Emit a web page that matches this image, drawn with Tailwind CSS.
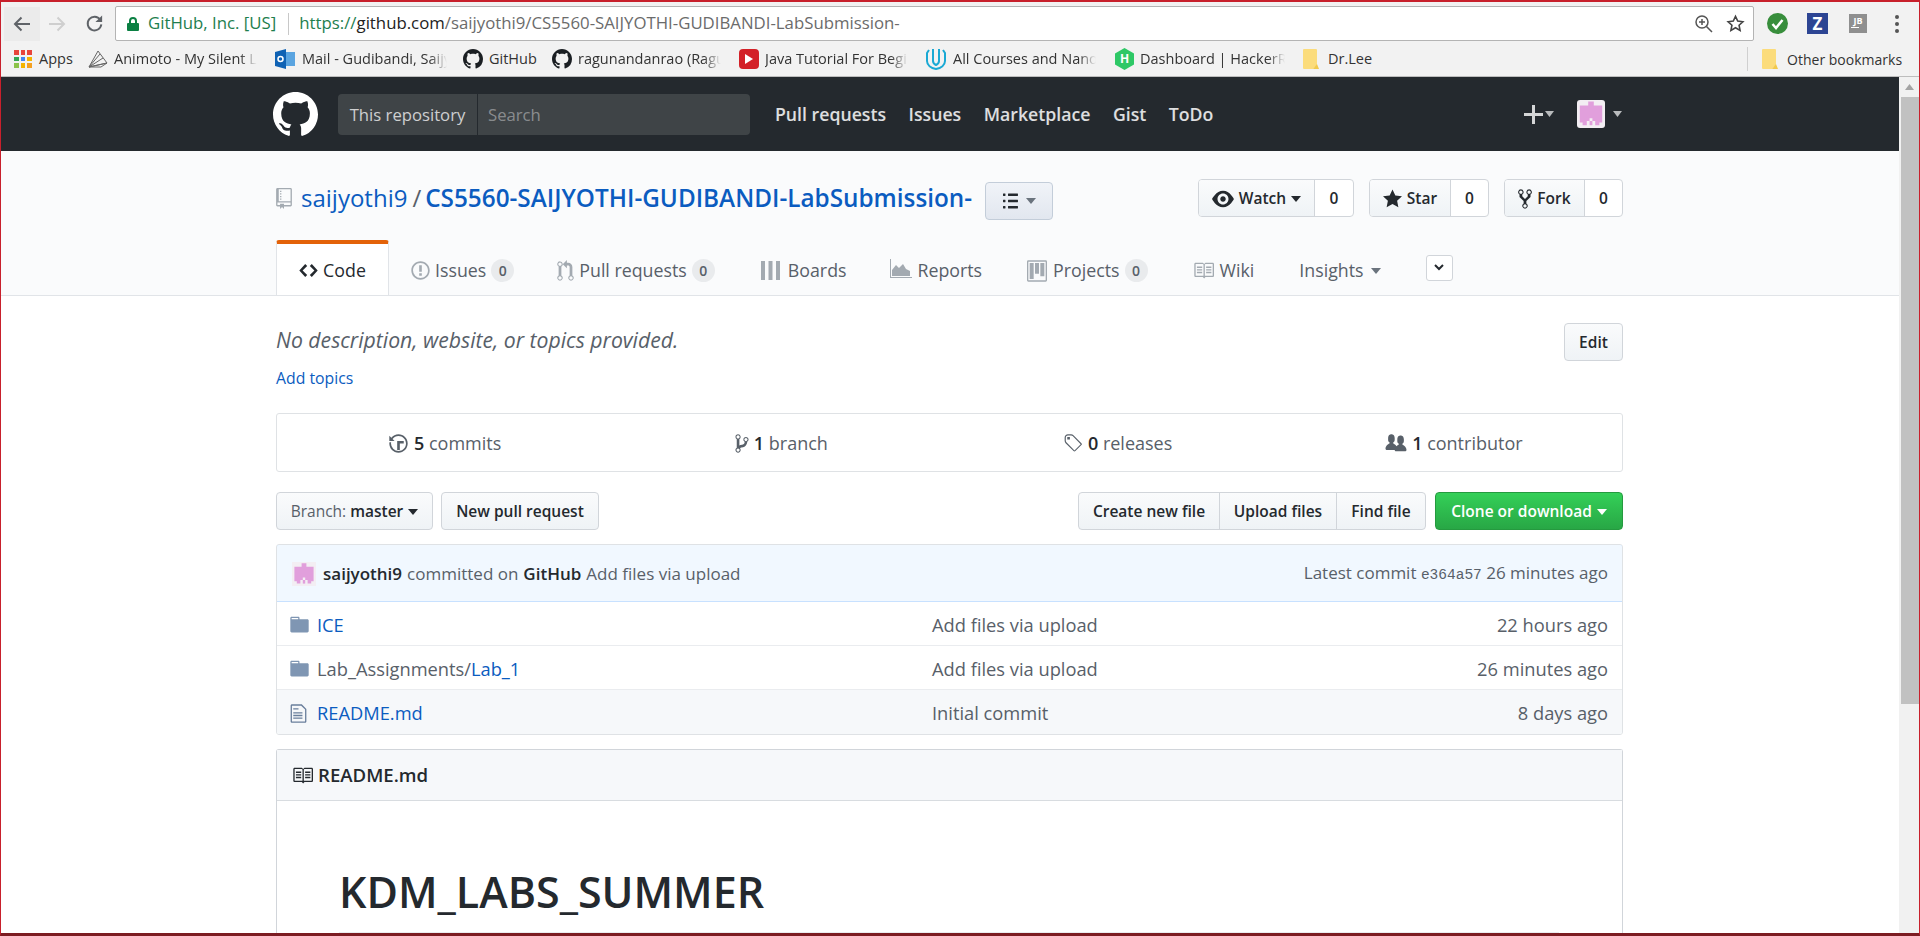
<!DOCTYPE html>
<html lang="en">
<head>
  <meta charset="UTF-8" />
  <title>saijyothi9/CS5560-SAIJYOTHI-GUDIBANDI-LabSubmission-</title>
  <script src="https://cdn.jsdelivr.net/npm/@tailwindcss/browser@4"></script>
</head>
<body class="bg-white overflow-hidden font-['Open_Sans','Noto_Sans',sans-serif] text-[16px] text-[#24292e]">

<div class="w-[1920px] h-[936px] flex flex-col overflow-hidden border-t-2 border-x border-b-[3px] border-t-[#c8202c] border-x-[#c8202c] border-b-[#7c1c22]">

  <!-- browser toolbar -->
  <div class="h-[42px] shrink-0 bg-[#f2f2f2] flex items-center pt-[1px]">
    <div class="w-[36px] h-[34px] ml-[3px] flex items-center justify-center bg-[#ebebeb]">
      <svg width="18" height="18" viewBox="0 0 18 18" fill="none" stroke="#5f6368" stroke-width="2"><path d="M17 9H2M8.500 2.500L2 9l6.500 6.500"/></svg>
    </div>
    <div class="w-[33px] flex justify-center">
      <svg width="18" height="18" viewBox="0 0 18 18" fill="none" stroke="#cfcfcf" stroke-width="2"><path d="M1 9h15M9.500 2.500L16 9l-6.500 6.500"/></svg>
    </div>
    <div class="w-[42px] flex justify-center">
      <svg width="19" height="19" viewBox="0 0 20 20" fill="none" stroke="#5f6368" stroke-width="2"><path d="M16 6a7.200 7.200 0 1 0 1.200 5"/><path d="M18 1.500v7h-7" fill="#5f6368" stroke="none"/></svg>
    </div>
    <!-- address bar -->
    <div class="w-[1639px] shrink-0 h-[35px] bg-white border border-[#b4b4b4] rounded-[2px] flex items-center text-[16.800px] leading-none">
      <svg class="ml-[11px]" width="12" height="16" viewBox="0 0 12 16"><path fill="#0b8043" d="M2 7V5a4 4 0 0 1 8 0v2h1a1 1 0 0 1 1 1v6a1 1 0 0 1-1 1H1a1 1 0 0 1-1-1V8a1 1 0 0 1 1-1zm2 0h4V5a2 2 0 0 0-4 0z"/></svg>
      <span class="ml-[9px] text-[#1e7e4e]">GitHub, Inc. [US]</span>
      <span class="ml-[12px] w-px h-[22px] bg-[#c8c8c8]"></span>
      <span class="ml-[10px]"><span class="text-[#1e7e4e]">https://</span><span class="text-[#222]">github.com</span><span class="text-[#6b6b6b]">/saijyothi9/CS5560-SAIJYOTHI-GUDIBANDI-LabSubmission-</span></span>
      <div class="ml-auto mr-[8px] flex items-center gap-[13px]">
        <svg width="19" height="19" viewBox="0 0 19 19" fill="none" stroke="#555" stroke-width="1.500"><circle cx="8" cy="8" r="6"/><path d="M12.500 12.500L18 18M8 5v6M5 8h6"/></svg>
        <svg width="19" height="19" viewBox="0 0 24 24" fill="none" stroke="#444" stroke-width="2"><path d="M12 3l2.800 6 6.500.8-4.800 4.400 1.300 6.500L12 17.400l-5.800 3.300 1.300-6.500L2.700 9.800 9.200 9z"/></svg>
      </div>
    </div>
    <!-- extensions -->
    <div class="ml-[13px] flex items-center">
      <svg width="21" height="21" viewBox="0 0 21 21"><circle cx="10.500" cy="10.500" r="10.500" fill="#388e3c"/><path d="M5.500 11l3.500 4 6.500-8" fill="none" stroke="#fff" stroke-width="2.500"/></svg>
      <span class="ml-[19px] w-[21px] h-[21px] bg-[#2d4593] text-white text-[17px] font-bold flex items-center justify-center">Z</span>
      <span class="ml-[21px] w-[18px] h-[19px] bg-[#8f8f8f] text-white text-[9px] leading-none pt-[2px] text-center font-bold">JB<span class="block w-[8px] h-[1px] ml-[2px] mt-[2px] bg-white"></span></span>
      <div class="ml-[28px] flex flex-col gap-[3px]">
        <span class="w-[4px] h-[4px] rounded-full bg-[#555]"></span>
        <span class="w-[4px] h-[4px] rounded-full bg-[#555]"></span>
        <span class="w-[4px] h-[4px] rounded-full bg-[#555]"></span>
      </div>
    </div>
  </div>

  <!-- bookmarks bar -->
  <div class="h-[33px] shrink-0 bg-[#f2f2f2] border-b border-[#bdbdbd] pb-[2px] flex items-center text-[14.500px] text-[#333] whitespace-nowrap">
    <div class="ml-[13px] w-[18px] h-[18px] grid grid-cols-3 gap-[2px]">
      <span class="bg-[#e8453c]"></span><span class="bg-[#e8453c]"></span><span class="bg-[#e8453c]"></span>
      <span class="bg-[#34a853]"></span><span class="bg-[#4285f4]"></span><span class="bg-[#f4b400]"></span>
      <span class="bg-[#8bc34a]"></span><span class="bg-[#f4b400]"></span><span class="bg-[#f4a020]"></span>
    </div>
    <span class="ml-[7px] w-[49px]">Apps</span>
    <svg width="20" height="20" viewBox="0 0 20 20" fill="none" stroke="#666" stroke-width="1"><path d="M1 18L10 2l9 12zM1 18l11-13M1 18l14-9M1 18l18-4M1 18h12l6-4"/></svg>
    <span class="ml-[6px] w-[143px] overflow-hidden [mask-image:linear-gradient(to_right,black_88%,transparent)]">Animoto - My Silent Life</span>
    <svg class="ml-[18px]" width="20" height="20" viewBox="0 0 20 20"><rect x="7" y="3" width="13" height="14" fill="#5aa4e0"/><path fill="#0f62b4" d="M0 3l11-3v20L0 17z"/><circle cx="5.500" cy="10" r="2.500" fill="none" stroke="#fff" stroke-width="1.500"/></svg>
    <span class="ml-[7px] w-[145px] overflow-hidden [mask-image:linear-gradient(to_right,black_88%,transparent)]">Mail - Gudibandi, Saijyothi</span>
    <svg class="ml-[16px]" width="20" height="20" viewBox="0 0 16 16"><path fill="#1b1f23" d="M8 0C3.580 0 0 3.580 0 8c0 3.540 2.290 6.530 5.470 7.590.4.070.55-.17.55-.38 0-.19-.01-.82-.01-1.490-2.010.37-2.530-.49-2.690-.94-.09-.23-.48-.94-.82-1.130-.28-.15-.68-.52-.01-.53.63-.01 1.080.58 1.230.82.72 1.210 1.870.87 2.330.66.07-.52.28-.87.51-1.070-1.780-.2-3.640-.89-3.640-3.950 0-.87.31-1.590.82-2.150-.08-.2-.36-1.020.08-2.120 0 0 .67-.21 2.200.82.64-.18 1.320-.27 2-.27.68 0 1.360.09 2 .27 1.530-1.040 2.200-.82 2.200-.82.44 1.100.16 1.920.08 2.120.51.56.82 1.270.82 2.150 0 3.070-1.870 3.750-3.650 3.950.29.25.54.73.54 1.480 0 1.070-.01 1.930-.01 2.200 0 .21.15.46.55.38A8.013 8.013 0 0 0 16 8c0-4.420-3.580-8-8-8z"/></svg>
    <span class="ml-[6px] w-[63px]">GitHub</span>
    <svg width="20" height="20" viewBox="0 0 16 16"><path fill="#1b1f23" d="M8 0C3.580 0 0 3.580 0 8c0 3.540 2.290 6.530 5.470 7.590.4.070.55-.17.55-.38 0-.19-.01-.82-.01-1.490-2.010.37-2.530-.49-2.690-.94-.09-.23-.48-.94-.82-1.130-.28-.15-.68-.52-.01-.53.63-.01 1.080.58 1.230.82.72 1.210 1.870.87 2.330.66.07-.52.28-.87.51-1.070-1.780-.2-3.640-.89-3.640-3.950 0-.87.31-1.590.82-2.150-.08-.2-.36-1.020.08-2.120 0 0 .67-.21 2.200.82.64-.18 1.320-.27 2-.27.68 0 1.360.09 2 .27 1.530-1.040 2.200-.82 2.200-.82.44 1.100.16 1.920.08 2.120.51.56.82 1.270.82 2.150 0 3.070-1.870 3.750-3.650 3.950.29.25.54.73.54 1.480 0 1.070-.01 1.930-.01 2.200 0 .21.15.46.55.38A8.013 8.013 0 0 0 16 8c0-4.420-3.580-8-8-8z"/></svg>
    <span class="ml-[6px] w-[143px] overflow-hidden [mask-image:linear-gradient(to_right,black_88%,transparent)]">ragunandanrao (Ragunandan)</span>
    <span class="ml-[18px] w-[20px] h-[20px] rounded-[4px] bg-[#d32027] flex items-center justify-center"><svg width="8" height="10" viewBox="0 0 8 10"><path fill="#fff" d="M0 0l8 5-8 5z"/></svg></span>
    <span class="ml-[6px] w-[143px] overflow-hidden [mask-image:linear-gradient(to_right,black_88%,transparent)]">Java Tutorial For Beginners</span>
    <svg class="ml-[18px]" width="20" height="22" viewBox="0 0 20 22" fill="none" stroke="#1aa9d4" stroke-width="2"><path d="M3 2l-2 3v8c0 4 4 7 9 8 5-1 9-4 9-8V5l-2-3M7 1v12c0 2 1 3 3 4 2-1 3-2 3-4V1"/></svg>
    <span class="ml-[7px] w-[143px] overflow-hidden [mask-image:linear-gradient(to_right,black_88%,transparent)]">All Courses and Nanodegrees</span>
    <span class="ml-[19px] w-[19px] h-[22px] bg-[#2ec866] [clip-path:polygon(50%_0,100%_25%,100%_75%,50%_100%,0_75%,0_25%)] text-white text-[12px] font-bold flex items-center justify-center">H</span>
    <span class="ml-[6px] w-[145px] overflow-hidden [mask-image:linear-gradient(to_right,black_88%,transparent)]">Dashboard | HackerRank</span>
    <svg class="ml-[18px]" width="16" height="20" viewBox="0 0 16 20"><path fill="#fbdc7c" d="M0 1a1 1 0 0 1 1-1h12a1 1 0 0 1 1 1v15l-4 4H1a1 1 0 0 1-1-1z"/><path fill="#f2c94c" d="M14 15l2 5h-6z"/></svg>
    <span class="ml-[9px]">Dr.Lee</span>
    <span class="ml-[375px] w-px h-[24px] bg-[#d0d0d0]"></span>
    <svg class="ml-[14px]" width="16" height="20" viewBox="0 0 16 20"><path fill="#fbdc7c" d="M0 1a1 1 0 0 1 1-1h12a1 1 0 0 1 1 1v15l-4 4H1a1 1 0 0 1-1-1z"/><path fill="#f2c94c" d="M14 15l2 5h-6z"/></svg>
    <span class="ml-[9px] text-[14px]">Other bookmarks</span>
  </div>

  <div class="flex-1 flex min-h-0">
    <div class="w-[1898px] shrink-0 overflow-hidden">

      <!-- github header -->
      <header class="h-[74px] bg-[#24292e] flex items-center pl-[272px] text-white">
        <svg width="45" height="45" viewBox="0 0 16 16"><path fill="#fff" d="M8 0C3.580 0 0 3.580 0 8c0 3.540 2.290 6.530 5.470 7.590.4.070.55-.17.55-.38 0-.19-.01-.82-.01-1.490-2.010.37-2.530-.49-2.690-.94-.09-.23-.48-.94-.82-1.130-.28-.15-.68-.52-.01-.53.63-.01 1.080.58 1.230.82.72 1.210 1.870.87 2.330.66.07-.52.28-.87.51-1.070-1.780-.2-3.640-.89-3.640-3.950 0-.87.31-1.590.82-2.150-.08-.2-.36-1.020.08-2.120 0 0 .67-.21 2.200.82.64-.18 1.320-.27 2-.27.68 0 1.360.09 2 .27 1.530-1.040 2.200-.82 2.200-.82.44 1.100.16 1.920.08 2.120.51.56.82 1.270.82 2.150 0 3.070-1.870 3.750-3.650 3.950.29.25.54.73.54 1.480 0 1.070-.01 1.930-.01 2.200 0 .21.15.46.55.38A8.013 8.013 0 0 0 16 8c0-4.420-3.580-8-8-8z"/></svg>
        <div class="ml-[20px] w-[412px] h-[41px] rounded-[4px] bg-[#3f4447] flex items-center text-[16.700px]">
          <span class="w-[140px] h-full pt-[1px] flex items-center justify-center border-r border-[#24292e] text-white/75">This repository</span>
          <span class="ml-[10px] pt-[1px] text-white/40">Search</span>
        </div>
        <nav class="flex items-center ml-[25px] pt-[1px] gap-[22.500px] text-[17.700px] font-semibold text-white/85">
          <span>Pull requests</span><span>Issues</span><span>Marketplace</span><span>Gist</span><span>ToDo</span>
        </nav>
        <div class="ml-auto mr-[277px] flex items-center">
          <svg width="19" height="19" viewBox="0 0 19 19"><path fill="#d5d6d7" d="M8 0h3v8h8v3h-8v8H8v-8H0V8h8z"/></svg>
          <svg class="ml-[2px]" width="9" height="6" viewBox="0 0 9 6"><path fill="#b9bbbd" d="M0 0h9L4.500 6z"/></svg>
          <svg class="ml-[23px] rounded-[3px]" width="28" height="28" viewBox="0 0 20 20"><rect width="20" height="20" fill="#f3eef3"/><path fill="#e19fdc" d="M8 1h4v3h6v12h-2v2h-3v-3h-2v-2H9v2H7v3H4v-2H2V4h6z"/><rect x="9" y="15" width="2" height="3" fill="#e19fdc"/></svg>
          <svg class="ml-[8px]" width="9" height="6" viewBox="0 0 9 6"><path fill="#b9bbbd" d="M0 0h9L4.500 6z"/></svg>
        </div>
      </header>

      <!-- repo head -->
      <div class="h-[145px] bg-[#fafbfc] border-b border-[#e1e4e8]">
        <div class="ml-[275px] w-[1347px] h-full flex flex-col">
          <div class="h-[91px] flex pt-[28px]">
            <div class="flex items-center h-[38px] text-[24px] text-[#586069]">
              <svg width="16" height="21" viewBox="0 0 12 16"><path fill="#a3aab1" d="M4 9H3V8h1v1zm0-3H3v1h1V6zm0-2H3v1h1V4zm0-2H3v1h1V2zm8-1v12c0 .55-.45 1-1 1H6v2l-1.500-1.500L3 16v-2H1c-.55 0-1-.45-1-1V1c0-.55.45-1 1-1h10c.55 0 1 .45 1 1zm-1 10H1v2h2v-1h3v1h5v-2zm0-10H2v9h9V1z"/></svg>
              <span class="ml-[9px] text-[#0b5cc0]">saijyothi9</span>
              <span class="ml-[5px] mr-[4px]">/</span>
              <span class="text-[24.300px] font-semibold text-[#0b5cc0]">CS5560-SAIJYOTHI-GUDIBANDI-LabSubmission-</span>
              <span class="ml-[13px] mt-[6px] w-[68px] h-[38px] border border-[#c3cdd9] rounded-[4px] bg-gradient-to-b from-[#f0f3f8] to-[#e2e7ef] flex items-center justify-center gap-[7px]">
                <svg width="17" height="20" viewBox="0 0 12 16"><path fill="#24292e" d="M2 13c0 .59 0 1-.59 1H.59C0 14 0 13.590 0 13c0-.59 0-1 .59-1h.81c.59 0 .59.41.59 1H2zm2.590-9h6.810c.59 0 .59-.41.59-1 0-.59 0-1-.59-1H4.590C4 2 4 2.410 4 3c0 .59 0 1 .59 1zM1.410 7H.59C0 7 0 7.410 0 8c0 .59 0 1 .59 1h.81c.59 0 .59-.41.59-1 0-.59 0-1-.59-1h.01zm0-5H.59C0 2 0 2.410 0 3c0 .59 0 1 .59 1h.81c.59 0 .59-.41.59-1 0-.59 0-1-.59-1h.01zm10 5H4.590C4 7 4 7.410 4 8c0 .59 0 1 .59 1h6.810c.59 0 .59-.41.59-1 0-.59 0-1-.59-1h.01zm0 5H4.590C4 12 4 12.410 4 13c0 .59 0 1 .59 1h6.810c.59 0 .59-.41.59-1 0-.59 0-1-.59-1h.01z"/></svg>
                <svg width="10" height="6" viewBox="0 0 10 6"><path fill="#6a737d" d="M0 0h10L5 6z"/></svg>
              </span>
            </div>
            <div class="ml-auto flex gap-[15px] text-[15.500px] font-semibold">
              <div class="flex h-[38px] border border-[#d1d5da] rounded-[4px] overflow-hidden bg-white">
                <span class="w-[116px] pt-[1px] bg-gradient-to-b from-[#fafbfc] to-[#eff3f6] border-r border-[#d1d5da] flex items-center justify-center gap-[5px]">
                  <svg width="22" height="22" viewBox="0 0 16 16"><path fill="#24292e" d="M8.060 2C3 2 0 8 0 8s3 6 8.060 6C13 14 16 8 16 8s-3-6-7.940-6zM8 12c-2.200 0-4-1.780-4-4 0-2.200 1.800-4 4-4 2.220 0 4 1.800 4 4 0 2.220-1.780 4-4 4zm2-4c0 1.110-.89 2-2 2-1.110 0-2-.89-2-2 0-1.110.89-2 2-2 1.110 0 2 .89 2 2z"/></svg>
                  Watch
                  <svg width="10" height="6" viewBox="0 0 10 6"><path fill="#24292e" d="M0 0h10L5 6z"/></svg>
                </span>
                <span class="w-[38px] pt-[1px] flex items-center justify-center">0</span>
              </div>
              <div class="flex h-[38px] border border-[#d1d5da] rounded-[4px] overflow-hidden bg-white">
                <span class="w-[81px] pt-[1px] bg-gradient-to-b from-[#fafbfc] to-[#eff3f6] border-r border-[#d1d5da] flex items-center justify-center gap-[5px]">
                  <svg width="19" height="22" viewBox="0 0 14 16"><path fill="#24292e" d="M14 6l-4.900-.64L7 1 4.900 5.360 0 6l3.600 3.260L2.670 14 7 11.670 11.330 14l-.93-4.740L14 6z"/></svg>
                  Star
                </span>
                <span class="w-[37px] pt-[1px] flex items-center justify-center">0</span>
              </div>
              <div class="flex h-[38px] border border-[#d1d5da] rounded-[4px] overflow-hidden bg-white">
                <span class="w-[80px] pt-[1px] bg-gradient-to-b from-[#fafbfc] to-[#eff3f6] border-r border-[#d1d5da] flex items-center justify-center gap-[5px]">
                  <svg width="14" height="22" viewBox="0 0 10 16"><path fill="#24292e" d="M8 1a1.993 1.993 0 0 0-1 3.720V6L5 8 3 6V4.720A1.993 1.993 0 0 0 2 1a1.993 1.993 0 0 0-1 3.720V6.500l3 3v1.780A1.993 1.993 0 0 0 5 15a1.993 1.993 0 0 0 1-3.720V9.500l3-3V4.720A1.993 1.993 0 0 0 8 1zM2 4.200C1.340 4.200.8 3.650.8 3c0-.65.55-1.200 1.200-1.200.65 0 1.200.55 1.200 1.200 0 .65-.55 1.200-1.200 1.200zm3 10c-.66 0-1.200-.55-1.200-1.200 0-.65.55-1.200 1.200-1.200.65 0 1.200.55 1.200 1.200 0 .65-.55 1.200-1.200 1.200zm3-10c-.66 0-1.200-.55-1.200-1.200 0-.65.55-1.200 1.200-1.200.65 0 1.200.55 1.200 1.200 0 .65-.55 1.200-1.200 1.200z"/></svg>
                  Fork
                </span>
                <span class="w-[37px] pt-[1px] flex items-center justify-center">0</span>
              </div>
            </div>
          </div>

          <!-- tabs -->
          <div class="flex-1 flex items-stretch text-[17.800px] text-[#586069]">
            <div class="relative z-10 w-[113px] h-[55px] pt-[1px] bg-white border-x border-[#e1e4e8] border-t-[4px] border-t-[#e36209] rounded-t-[3px] flex items-center justify-center gap-[5px] text-[#24292e]">
              <svg width="19" height="21" viewBox="0 0 14 16"><path fill="#24292e" d="M9.500 3L8 4.500 11.500 8 8 11.500 9.500 13 14 8 9.500 3zm-5 0L0 8l4.500 5L6 11.500 2.500 8 6 4.500 4.500 3z"/></svg>
              Code
            </div>
            <div class="flex items-center ml-[22px] pt-[6px]">
              <svg width="19" height="21" viewBox="0 0 14 16"><path fill="#a3aab1" d="M7 2.300c3.140 0 5.700 2.560 5.700 5.700s-2.560 5.700-5.700 5.700A5.710 5.710 0 0 1 1.300 8c0-3.140 2.560-5.700 5.700-5.700zM7 1C3.140 1 0 4.140 0 8s3.140 7 7 7 7-3.140 7-7-3.140-7-7-7zm1 3H6v5h2V4zm0 6H6v2h2v-2z"/></svg>
              <span class="ml-[5px]">Issues</span>
              <span class="ml-[5px] w-[23px] h-[23px] rounded-full bg-[#e9ebed] text-[#586069] text-[14px] font-semibold flex items-center justify-center">0</span>
            </div>
            <div class="flex items-center ml-[43px] pt-[6px]">
              <svg width="17" height="22" viewBox="0 0 12 16"><path fill="#a3aab1" d="M11 11.280V5c-.03-.78-.34-1.470-.94-2.060C9.460 2.350 8.780 2.030 8 2H7V0L4 3l3 3V4h1c.27.020.48.11.69.31.21.2.3.42.31.69v6.280A1.993 1.993 0 0 0 10 15a1.993 1.993 0 0 0 1-3.720zm-1 2.920c-.66 0-1.200-.55-1.200-1.200 0-.65.55-1.200 1.200-1.200.65 0 1.200.55 1.200 1.200 0 .65-.55 1.200-1.200 1.200zM4 3c0-1.110-.89-2-2-2a1.993 1.993 0 0 0-1 3.720v6.560A1.993 1.993 0 0 0 2 15a1.993 1.993 0 0 0 1-3.720V4.720c.59-.34 1-.98 1-1.720zm-.8 10c0 .66-.55 1.200-1.200 1.200-.65 0-1.200-.55-1.200-1.200 0-.65.55-1.200 1.200-1.200.65 0 1.200.55 1.200 1.200zM2 4.200C1.340 4.200.8 3.650.8 3c0-.65.55-1.200 1.200-1.200.65 0 1.200.55 1.200 1.200 0 .65-.55 1.200-1.200 1.200z"/></svg>
              <span class="ml-[5px]">Pull requests</span>
              <span class="ml-[5px] w-[23px] h-[23px] rounded-full bg-[#e9ebed] text-[#586069] text-[14px] font-semibold flex items-center justify-center">0</span>
            </div>
            <div class="flex items-center ml-[46px] pt-[6px]">
              <svg width="19" height="19" viewBox="0 0 19 19"><path fill="#a3aab1" d="M0 0h4v19H0zM7.500 0h4v19h-4zM15 0h4v19h-4z"/></svg>
              <span class="ml-[8px]">Boards</span>
            </div>
            <div class="flex items-center ml-[44px] pt-[6px]">
              <svg class="mb-[5px]" width="22" height="19" viewBox="0 0 22 19"><path fill="#a3aab1" d="M0 0h1v18h21v1H0zM2 17v-6l4-5 3 3 4-4 3 5 4 2v5z"/></svg>
              <span class="ml-[5px]">Reports</span>
            </div>
            <div class="flex items-center ml-[45px] pt-[6px]">
              <svg width="20" height="22" viewBox="0 0 15 16"><path fill="#a3aab1" fill-rule="evenodd" d="M10 12h3V2h-3v10zm-4-2h3V2H6v8zm-4 4h3V2H2v12zm-1 1h13V1H1v14zM14 0H1a1 1 0 0 0-1 1v14a1 1 0 0 0 1 1h13a1 1 0 0 0 1-1V1a1 1 0 0 0-1-1z"/></svg>
              <span class="ml-[6px]">Projects</span>
              <span class="ml-[5px] w-[23px] h-[23px] rounded-full bg-[#e9ebed] text-[#586069] text-[14px] font-semibold flex items-center justify-center">0</span>
            </div>
            <div class="flex items-center ml-[45px] pt-[6px]">
              <svg width="21" height="21" viewBox="0 0 16 16"><path fill="#a3aab1" d="M3 5h4v1H3V5zm0 3h4V7H3v1zm0 2h4V9H3v1zm11-5h-4v1h4V5zm0 2h-4v1h4V7zm0 2h-4v1h4V9zm2-6v9c0 .55-.45 1-1 1H9.500l-1 1-1-1H2c-.55 0-1-.45-1-1V3c0-.55.45-1 1-1h5.500l1 1 1-1H15c.55 0 1 .45 1 1zm-8 .5L7.500 3H2v9h6V3.500zm7-.5H9.500l-.5.5V12h6V3z"/></svg>
              <span class="ml-[6px]">Wiki</span>
            </div>
            <div class="flex items-center ml-[45px] pt-[6px]">
              <span>Insights</span>
              <svg class="ml-[7px]" width="10" height="6" viewBox="0 0 10 6"><path fill="#6a737d" d="M0 0h10L5 6z"/></svg>
            </div>
            <div class="flex items-center ml-[45px]">
              <span class="w-[27px] h-[26px] bg-white border border-[#d1d5da] rounded-[3px] flex items-center justify-center">
                <svg width="10" height="7" viewBox="0 0 10 7" fill="none" stroke="#24292e" stroke-width="2"><path d="M1 1l4 4 4-4"/></svg>
              </span>
            </div>
          </div>
        </div>
      </div>

      <!-- repo content -->
      <main class="ml-[275px] w-[1347px]">
        <div class="h-[27px]"></div>
        <div class="flex justify-between h-[38px]">
          <p class="italic text-[21.200px] text-[#586069] leading-[34px]">No description, website, or topics provided.</p>
          <span class="w-[59px] h-[38px] pt-[1px] bg-gradient-to-b from-[#fafbfc] to-[#eff3f6] border border-[#d1d5da] rounded-[4px] text-[15.500px] font-semibold flex items-center justify-center">Edit</span>
        </div>
        <p class="h-[24px] mt-[5px] text-[15.800px] leading-[24px] text-[#0b5cc0]">Add topics</p>

        <!-- numbers summary -->
        <div class="mt-[23px] h-[59px] pt-[1px] border border-[#dfe2e5] rounded-[3px] grid grid-cols-4 text-[18px] text-[#586069]">
          <div class="flex items-center justify-center gap-[6px]">
            <svg width="19" height="21" viewBox="0 0 14 16"><path fill="#586069" d="M8 13H6V6h5v2H8v5zM7 1C4.810 1 2.870 2.020 1.590 3.590L0 2v4h4L2.500 4.500C3.550 3.170 5.170 2.300 7 2.300c3.140 0 5.700 2.560 5.700 5.700s-2.560 5.700-5.700 5.700A5.710 5.710 0 0 1 1.300 8c0-.34.03-.67.09-1H.08C.03 7.330 0 7.660 0 8c0 3.860 3.140 7 7 7s7-3.140 7-7-3.140-7-7-7z"/></svg>
            <span><b class="font-semibold text-[#24292e]">5</b> commits</span>
          </div>
          <div class="flex items-center justify-center gap-[5px]">
            <svg width="14" height="21" viewBox="0 0 10 16"><path fill="#586069" d="M10 5c0-1.110-.89-2-2-2a1.993 1.993 0 0 0-1 3.720v.3c-.02.52-.23.98-.63 1.380-.4.4-.86.61-1.380.63-.83.020-1.480.16-2 .45V4.720a1.993 1.993 0 0 0-1-3.720C.88 1 0 1.890 0 3a2 2 0 0 0 1 1.720v6.560c-.59.35-1 .99-1 1.720 0 1.110.89 2 2 2 1.110 0 2-.89 2-2 0-.53-.2-1-.53-1.360.09-.06.48-.41.59-.47.25-.11.56-.17.94-.17 1.050-.05 1.950-.45 2.750-1.250S8.950 7.770 9 6.730h-.02C9.590 6.370 10 5.730 10 5zM2 1.800c.66 0 1.200.55 1.200 1.200 0 .65-.55 1.200-1.200 1.200C1.350 4.200.8 3.650.8 3c0-.65.55-1.200 1.200-1.200zm0 12.410c-.66 0-1.200-.55-1.200-1.200 0-.65.55-1.200 1.200-1.200.65 0 1.200.55 1.200 1.200 0 .65-.55 1.200-1.200 1.200zm6-8c-.66 0-1.200-.55-1.200-1.200 0-.65.55-1.200 1.200-1.200.65 0 1.200.55 1.200 1.200 0 .65-.55 1.200-1.200 1.200z"/></svg>
            <span><b class="font-semibold text-[#24292e]">1</b> branch</span>
          </div>
          <div class="flex items-center justify-center gap-[6px]">
            <svg width="19" height="21" viewBox="0 0 14 16"><path fill="#586069" d="M7.730 1.730C7.260 1.260 6.620 1 5.960 1H3.500C2.130 1 1 2.130 1 3.500v2.470c0 .66.27 1.300.73 1.770l6.060 6.060c.39.39 1.020.39 1.410 0l4.590-4.590a.996.996 0 0 0 0-1.410L7.730 1.730zM2.380 7.090c-.31-.3-.47-.7-.47-1.130V3.500c0-.88.72-1.590 1.590-1.590h2.470c.42 0 .83.16 1.130.47l6.140 6.130-4.730 4.730-6.130-6.150zM3.010 3h2v2H3V3h.01z"/></svg>
            <span><b class="font-semibold text-[#24292e]">0</b> releases</span>
          </div>
          <div class="flex items-center justify-center gap-[5px]">
            <svg width="22" height="21" viewBox="0 0 16 16"><path fill="#586069" d="M16 12.999c0 .439-.45 1-1 1H7.995c-.539 0-.994-.447-.995-.999H1c-.54 0-1-.561-1-1 0-2.634 3-4 3-4s.229-.409 0-1c-.841-.621-1.058-.59-1-3 .058-2.419 1.367-3 2.500-3s2.442.58 2.500 3c.058 2.410-.159 2.379-1 3-.229.59 0 1 0 1s1.549.711 2.420 2.088C9.196 9.369 10 8.999 10 8.999s.229-.409 0-1c-.841-.62-1.058-.59-1-3 .058-2.419 1.367-3 2.500-3s2.437.581 2.495 3c.059 2.410-.158 2.380-1 3-.229.59 0 1 0 1s3.005 1.366 3.005 4z"/></svg>
            <span><b class="font-semibold text-[#24292e]">1</b> contributor</span>
          </div>
        </div>

        <!-- file navigation -->
        <div class="mt-[20px] h-[38px] flex text-[15.500px] font-semibold">
          <span class="w-[157px] pt-[1px] bg-gradient-to-b from-[#fafbfc] to-[#eff3f6] border border-[#d1d5da] rounded-[4px] flex items-center justify-center gap-[5px]"><span><span class="font-normal text-[#586069]">Branch:</span> master</span><svg width="10" height="6" viewBox="0 0 10 6"><path fill="#24292e" d="M0 0h10L5 6z"/></svg></span>
          <span class="ml-[8px] w-[158px] pt-[1px] bg-gradient-to-b from-[#fafbfc] to-[#eff3f6] border border-[#d1d5da] rounded-[4px] flex items-center justify-center">New pull request</span>
          <div class="ml-auto flex border border-[#d1d5da] rounded-[4px] overflow-hidden bg-gradient-to-b from-[#fafbfc] to-[#eff3f6]">
            <span class="w-[140px] pt-[1px] flex items-center justify-center">Create new file</span>
            <span class="w-[118px] pt-[1px] flex items-center justify-center border-x border-[#d1d5da]">Upload files</span>
            <span class="w-[88px] pt-[1px] flex items-center justify-center">Find file</span>
          </div>
          <span class="ml-[9px] w-[188px] pt-[1px] bg-gradient-to-b from-[#34d058] to-[#28a745] border border-[#259a3f] rounded-[4px] text-white flex items-center justify-center gap-[5px]">Clone or download<svg width="10" height="6" viewBox="0 0 10 6"><path fill="#fff" d="M0 0h10L5 6z"/></svg></span>
        </div>

        <!-- commit tease + file list -->
        <div class="mt-[14px] border border-[#dfe2e5] rounded-[3px] text-[18.300px] overflow-hidden">
          <div class="h-[58px] -mx-px -mt-px pt-[1px] bg-[#f1f8ff] border border-[#c8e1ff] rounded-t-[3px] flex items-center pl-[15px] pr-[14px] text-[17px] text-[#586069]">
            <svg width="24" height="24" viewBox="0 0 20 20"><rect width="20" height="20" fill="#f3eef3"/><path fill="#e19fdc" d="M8 1h4v3h6v12h-2v2h-3v-3h-2v-2H9v2H7v3H4v-2H2V4h6z"/><rect x="9" y="15" width="2" height="3" fill="#e19fdc"/></svg>
            <span class="ml-[7px] font-semibold text-[#24292e]">saijyothi9</span>
            <span class="ml-[5px]">committed on</span>
            <span class="ml-[5px] font-semibold text-[#24292e]">GitHub</span>
            <span class="ml-[5px]">Add files via upload</span>
            <span class="ml-auto">Latest commit <span class="font-['Liberation_Mono',monospace] text-[14.500px]">e364a57</span> 26 minutes ago</span>
          </div>
          <div class="h-[44px] pt-[2px] flex items-center pl-[13px] pr-[14px] border-b border-[#eaecef]">
            <svg width="19" height="21" viewBox="0 0 14 16"><path fill="#7f96b3" d="M13 4H7V3c0-.66-.31-1-1-1H1c-.55 0-1 .45-1 1v10c0 .55.45 1 1 1h12c.55 0 1-.45 1-1V5c0-.55-.45-1-1-1zM6 4H1V3h5v1z"/></svg>
            <span class="ml-[8px] w-[615px] text-[#0b5cc0]">ICE</span>
            <span class="text-[#586069]">Add files via upload</span>
            <span class="ml-auto text-[#586069]">22 hours ago</span>
          </div>
          <div class="h-[44px] pt-[2px] flex items-center pl-[13px] pr-[14px] border-b border-[#eaecef]">
            <svg width="19" height="21" viewBox="0 0 14 16"><path fill="#7f96b3" d="M13 4H7V3c0-.66-.31-1-1-1H1c-.55 0-1 .45-1 1v10c0 .55.45 1 1 1h12c.55 0 1-.45 1-1V5c0-.55-.45-1-1-1zM6 4H1V3h5v1z"/></svg>
            <span class="ml-[8px] w-[615px] text-[#586069]">Lab_Assignments/<span class="text-[#0b5cc0]">Lab_1</span></span>
            <span class="text-[#586069]">Add files via upload</span>
            <span class="ml-auto text-[#586069]">26 minutes ago</span>
          </div>
          <div class="h-[44px] pt-[2px] bg-[#f6f8fa] flex items-center pl-[13px] pr-[14px]">
            <svg width="17" height="21" viewBox="0 0 12 16"><path fill="#6a7f9c" d="M6 5H2V4h4v1zM2 8h7V7H2v1zm0 2h7V9H2v1zm0 2h7v-1H2v1zm10-7.500V14c0 .55-.45 1-1 1H1c-.55 0-1-.45-1-1V2c0-.55.45-1 1-1h7.500L12 4.500zM11 5L8 2H1v12h10V5z"/></svg>
            <span class="ml-[10px] w-[615px] text-[#0b5cc0]">README.md</span>
            <span class="text-[#586069]">Initial commit</span>
            <span class="ml-auto text-[#586069]">8 days ago</span>
          </div>
        </div>

        <!-- readme -->
        <div class="mt-[14px] border-x border-t border-[#d1d5da] rounded-t-[3px]">
          <div class="h-[51px] bg-[#f6f8fa] border-b border-[#d8dce0] flex items-center pl-[15px] text-[18.600px] font-semibold">
            <svg width="21" height="21" viewBox="0 0 16 16"><path fill="#24292e" d="M3 5h4v1H3V5zm0 3h4V7H3v1zm0 2h4V9H3v1zm11-5h-4v1h4V5zm0 2h-4v1h4V7zm0 2h-4v1h4V9zm2-6v9c0 .55-.45 1-1 1H9.500l-1 1-1-1H2c-.55 0-1-.45-1-1V3c0-.55.45-1 1-1h5.500l1 1 1-1H15c.55 0 1 .45 1 1zm-8 .5L7.500 3H2v9h6V3.500zm7-.5H9.500l-.5.5V12h6V3z"/></svg>
            <span class="ml-[5px]">README.md</span>
          </div>
          <div class="h-[140px] pt-[66px] pl-[62px] pr-[63px]">
            <h1 class="text-[43px] leading-[50px] font-semibold border-b border-[#eaecef] pb-[15px]">KDM_LABS_SUMMER</h1>
          </div>
        </div>
      </main>
    </div>

    <!-- scrollbar -->
    <div class="w-[20px] shrink-0 bg-[#f1f1f1] flex flex-col">
      <div class="h-[20px] flex items-center justify-center"><svg width="9" height="6" viewBox="0 0 9 6"><path fill="#a3a3a3" d="M4.500 0L9 6H0z"/></svg></div>
      <div class="h-[607px] ml-[2px] bg-[#c1c1c1]"></div>
    </div>
  </div>
</div>

</body>
</html>
